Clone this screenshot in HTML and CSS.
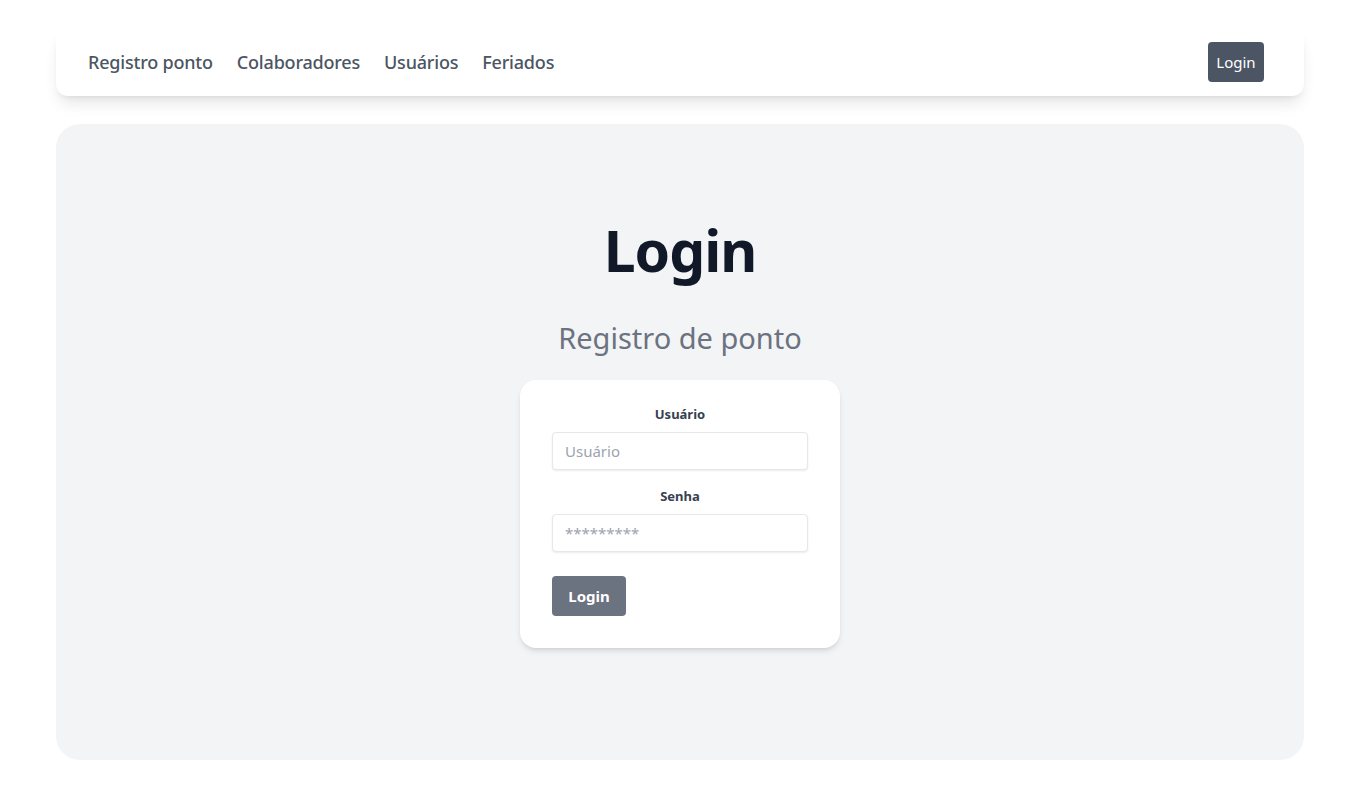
FILE: index.html
```html
<!DOCTYPE html>
<html lang="pt-BR">
<head>
<meta charset="utf-8">
<title>Login</title>
<link rel="stylesheet" href="styles.css">
</head>
<body>
<div class="page">
  <nav class="navbar">
    <ul class="nav-links">
      <li><a href="#">Registro ponto</a></li>
      <li><a href="#">Colaboradores</a></li>
      <li><a href="#">Usuários</a></li>
      <li><a href="#">Feriados</a></li>
    </ul>
    <button class="nav-login" type="button">Login</button>
  </nav>
  <main class="main-card">
    <h1 class="title">Login</h1>
    <h2 class="subtitle">Registro de ponto</h2>
    <form class="form-card">
      <label class="field-label" for="user">Usuário</label>
      <input class="field-input" id="user" type="text" placeholder="Usuário">
      <label class="field-label second" for="pass">Senha</label>
      <input class="field-input" id="pass" type="password" placeholder="*********">
      <button class="submit" type="button">Login</button>
    </form>
  </main>
</div>
</body>
</html>
```
FILE: styles.css
```css
* { box-sizing: border-box; }
html, body { margin: 0; padding: 0; background: #ffffff; }
body { font-family: "Noto Sans", "Open Sans", sans-serif; color: #111827; }
.page { padding: 28px 56px 28px; display: flex; flex-direction: column; gap: 28px; }
.navbar {
  height: 68px;
  background: #fff;
  border-radius: 12px;
  box-shadow: 0 10px 15px -3px rgba(0,0,0,0.1), 0 4px 6px -4px rgba(0,0,0,0.1);
  display: flex;
  align-items: center;
  justify-content: space-between;
  padding: 0 40px 0 32px;
}
.nav-links { list-style: none; margin: 0; padding: 0; display: flex; gap: 24px; }
.nav-links a { color: #4b5563; text-decoration: none; font-size: 18px; font-weight: 500; letter-spacing: -0.2px; }
.nav-login {
  width: 56px; height: 40px;
  background: #4b5563; color: #fff;
  border: none; border-radius: 4px;
  font-family: inherit; font-size: 15px; padding: 0;
}
.main-card {
  background: #f3f4f6;
  border-radius: 24px;
  height: 636px;
  padding-top: 96px;
  display: flex; flex-direction: column; align-items: center;
}
.title { margin: 0; font-size: 57px; line-height: 60px; font-weight: 700; color: #111827; letter-spacing: -1px; }
.subtitle { margin: 40px 0 0; font-size: 29px; line-height: 36px; font-weight: 400; color: #6b7280; }
.form-card {
  margin-top: 24px;
  width: 320px;
  background: #fff;
  border-radius: 16px;
  box-shadow: 0 4px 6px -1px rgba(0,0,0,0.1), 0 2px 4px -2px rgba(0,0,0,0.1);
  padding: 24px 32px 32px;
  display: flex; flex-direction: column;
}
.field-label { display: block; text-align: center; font-size: 13px; line-height: 20px; font-weight: 700; color: #374151; margin-bottom: 8px; }
.field-label.second { margin-top: 16px; }
.field-input {
  width: 256px; height: 38px;
  border: 1px solid #e5e7eb; border-radius: 4px;
  box-shadow: 0 1px 2px rgba(0,0,0,0.08);
  padding: 0 12px;
  font-family: inherit; font-size: 15px; color: #374151;
  outline: none;
}
.field-input::placeholder { color: #9ca3af; }
.submit {
  margin-top: 24px;
  align-self: flex-start;
  width: 74px; height: 40px;
  background: #6b7280; color: #fff;
  border: none; border-radius: 4px;
  font-family: inherit; font-size: 15px; font-weight: 700; padding: 0;
}
```
